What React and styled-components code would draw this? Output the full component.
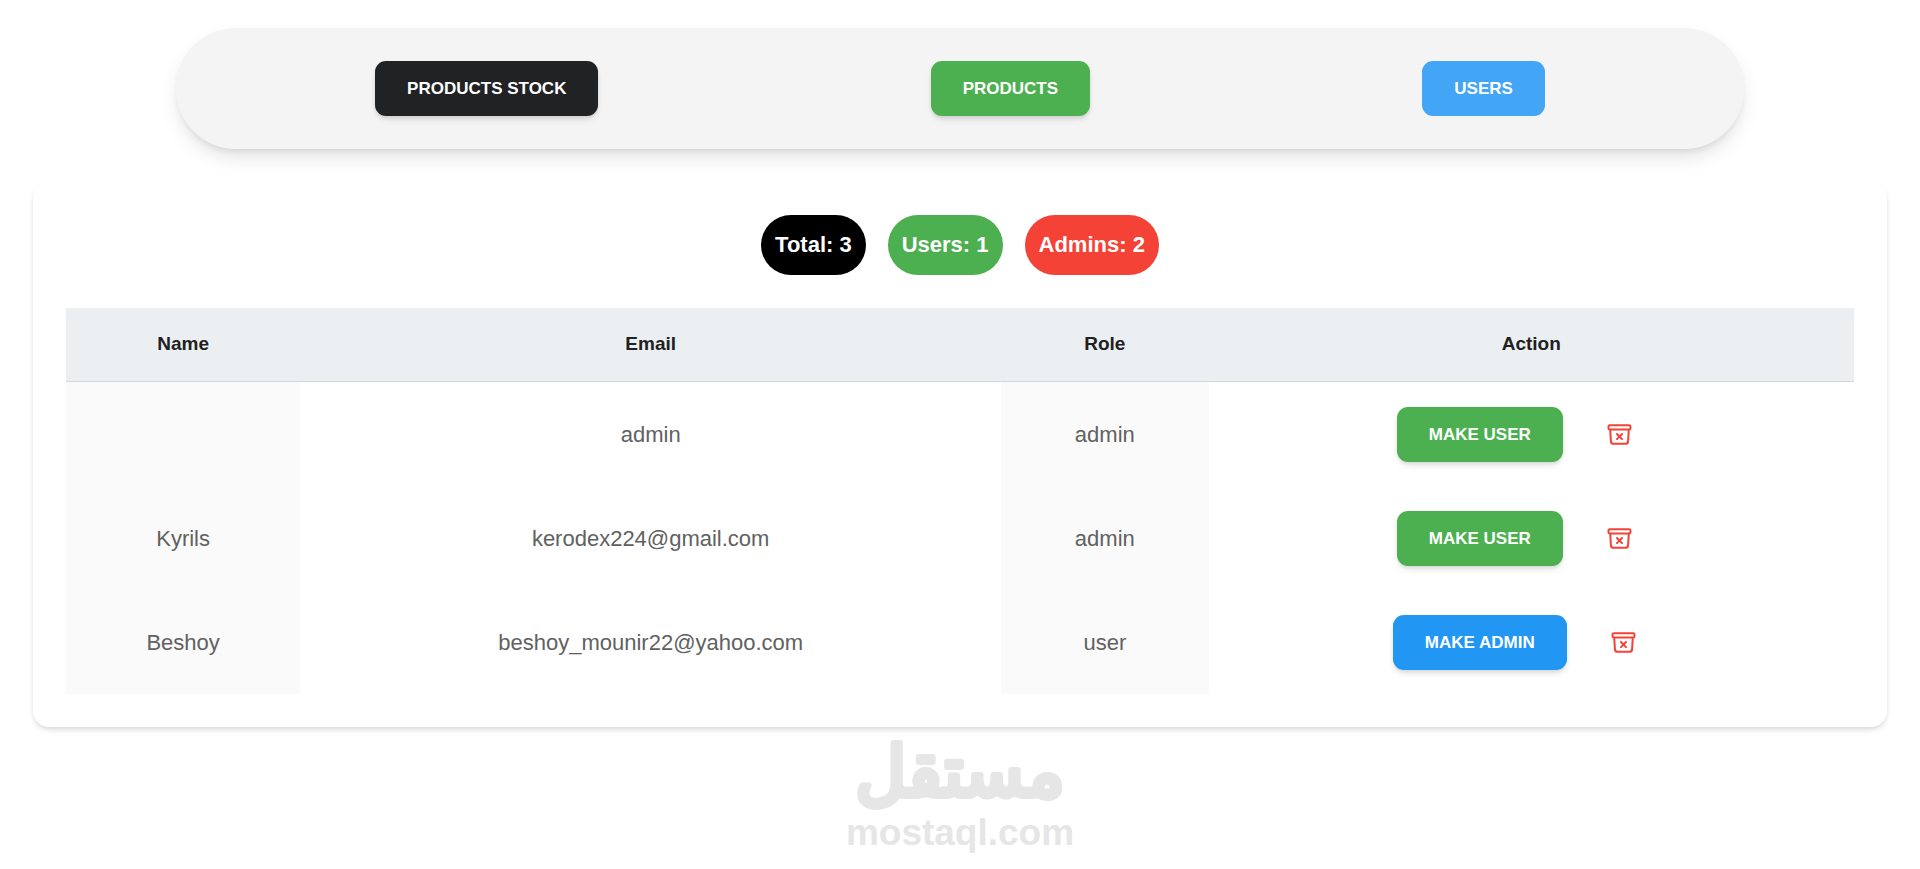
import React, { useState } from 'react'
import styled, { createGlobalStyle } from 'styled-components'

const GlobalStyle = createGlobalStyle`
  * {
    box-sizing: border-box;
  }
  body {
    margin: 0;
    background: #fff;
    font-family: "Liberation Sans", Arial, sans-serif;
  }
`

const Page = styled.div`
  display: flex;
  flex-direction: column;
  padding: 28px 33px 0;
`

const Nav = styled.nav`
  display: flex;
  justify-content: space-around;
  align-items: center;
  margin: 0 143px;
  padding: 33px;
  border-radius: 60px;
  background: #f4f4f4;
  box-shadow: 0 10px 20px -3px rgba(0, 0, 0, 0.12), 0 4px 6px -2px rgba(0, 0, 0, 0.08);
`

const colors = {
  black: '#212224',
  green: '#4caf50',
  blue: '#2196f3',
  lightBlue: '#42a5f5',
}

const Button = styled.button`
  padding: 17px 32px 16px;
  border: none;
  border-radius: 11px;
  background: ${props => colors[props.$color]};
  box-shadow: ${props => (props.$flat ? 'none' : '0 4px 6px -1px rgba(0, 0, 0, 0.12), 0 2px 4px -1px rgba(0, 0, 0, 0.08)')};
  color: #fff;
  font-family: inherit;
  font-size: 17px;
  font-weight: bold;
  line-height: 22px;
  text-transform: uppercase;
  white-space: nowrap;
  cursor: pointer;
`

const Card = styled.main`
  margin-top: 33px;
  padding: 33px;
  border-radius: 16px;
  background: #fff;
  box-shadow: 0 4px 6px -1px rgba(0, 0, 0, 0.1), 0 2px 4px -1px rgba(0, 0, 0, 0.08);
`

const Counts = styled.div`
  display: flex;
  justify-content: center;
  gap: 22px;
  margin-bottom: 33px;
`

const Count = styled.div`
  padding: 14px;
  border-radius: 30px;
  background: ${props => props.$bg};
  color: #fff;
  font-size: 22px;
  font-weight: bold;
  line-height: 32px;
`

const Table = styled.table`
  width: 100%;
  border-collapse: separate;
  border-spacing: 0;
  table-layout: fixed;
  text-align: center;
`

const Th = styled.th`
  width: ${props => props.$width};
  height: 74px;
  padding: 0 0 2px;
  border-bottom: 1px solid #cfd8dc;
  background: #eceff1;
  color: #212121;
  font-size: 19px;
  font-weight: bold;
`

const Td = styled.td`
  height: 104px;
  padding: 1px 0 0;
  background: ${props => (props.$shaded ? '#fafafa' : 'transparent')};
  color: #616161;
  font-size: 22px;
  line-height: 32px;
`

const Actions = styled.div`
  display: flex;
  justify-content: center;
  align-items: center;
  gap: 29px;
  padding-right: 19px;
`

const DeleteButton = styled.button`
  display: flex;
  justify-content: center;
  align-items: center;
  width: 55px;
  height: 55px;
  padding: 0;
  border: none;
  border-radius: 11px;
  background: none;
  color: #f44336;
  cursor: pointer;
`

const Brand = styled.footer`
  display: flex;
  flex-direction: column;
  align-items: center;
  margin-top: 13px;
  color: #e6e6e6;
`

const BrandMark = styled.svg`
  overflow: visible;
  fill: currentColor;
  stroke: currentColor;
  stroke-width: 6px;
  stroke-linejoin: round;
  font-family: "DejaVu Sans", sans-serif;
  font-size: 70px;
`

const BrandName = styled.div`
  font-size: 37px;
  font-weight: bold;
  line-height: 42px;
`

const ArchiveIcon = () => (
  <svg width="27" height="27" viewBox="0 0 24 24" fill="none" stroke="currentColor" strokeWidth="1.8" strokeLinecap="round" strokeLinejoin="round" aria-hidden="true">
    <path d="m20.25 7.5-.625 10.632a2.25 2.25 0 0 1-2.247 2.118H6.622a2.25 2.25 0 0 1-2.247-2.118L3.75 7.5m6 4.125 2.25 2.25m0 0 2.25 2.25M12 13.875l2.25-2.25M12 13.875l-2.25 2.25M3.375 7.5h17.25c.621 0 1.125-.504 1.125-1.125v-1.5c0-.621-.504-1.125-1.125-1.125H3.375c-.621 0-1.125.504-1.125 1.125v1.5c0 .621.504 1.125 1.125 1.125Z" />
  </svg>
)

const initialUsers = [
  { name: '', email: 'admin', role: 'admin' },
  { name: 'Kyrils', email: 'kerodex224@gmail.com', role: 'admin' },
  { name: 'Beshoy', email: 'beshoy_mounir22@yahoo.com', role: 'user' },
]

const App = () => {
  const [users, setUsers] = useState(initialUsers)
  const admins = users.filter(user => user.role === 'admin').length

  const toggleRole = email => {
    setUsers(users.map(user => (
      user.email === email ? { ...user, role: user.role === 'admin' ? 'user' : 'admin' } : user
    )))
  }

  const removeUser = email => {
    setUsers(users.filter(user => user.email !== email))
  }

  return (
    <Page>
      <GlobalStyle />
      <Nav>
        <Button $color="black">Products Stock</Button>
        <Button $color="green">Products</Button>
        <Button $color="lightBlue" $flat>Users</Button>
      </Nav>
      <Card>
        <Counts>
          <Count $bg="#000">Total: {users.length}</Count>
          <Count $bg="#4caf50">Users: {users.length - admins}</Count>
          <Count $bg="#f44336">Admins: {admins}</Count>
        </Counts>
        <Table>
          <thead>
            <tr>
              <Th $width="13.1%">Name</Th>
              <Th $width="39.2%">Email</Th>
              <Th $width="11.6%">Role</Th>
              <Th $width="36.1%">Action</Th>
            </tr>
          </thead>
          <tbody>
            {users.map(user => (
              <tr key={user.email}>
                <Td $shaded>{user.name}</Td>
                <Td>{user.email}</Td>
                <Td $shaded>{user.role}</Td>
                <Td>
                  <Actions>
                    <Button
                      $color={user.role === 'admin' ? 'green' : 'blue'}
                      onClick={() => toggleRole(user.email)}
                    >
                      {user.role === 'admin' ? 'Make User' : 'Make Admin'}
                    </Button>
                    <DeleteButton aria-label={`Delete ${user.email}`} onClick={() => removeUser(user.email)}>
                      <ArchiveIcon />
                    </DeleteButton>
                  </Actions>
                </Td>
              </tr>
            ))}
          </tbody>
        </Table>
      </Card>
      <Brand>
        <BrandMark width="226" height="72" viewBox="0 0 226 72">
          <text x="113" y="56" textAnchor="middle" lang="ar">مستقل</text>
        </BrandMark>
        <BrandName>mostaql.com</BrandName>
      </Brand>
    </Page>
  )
}

export default App
